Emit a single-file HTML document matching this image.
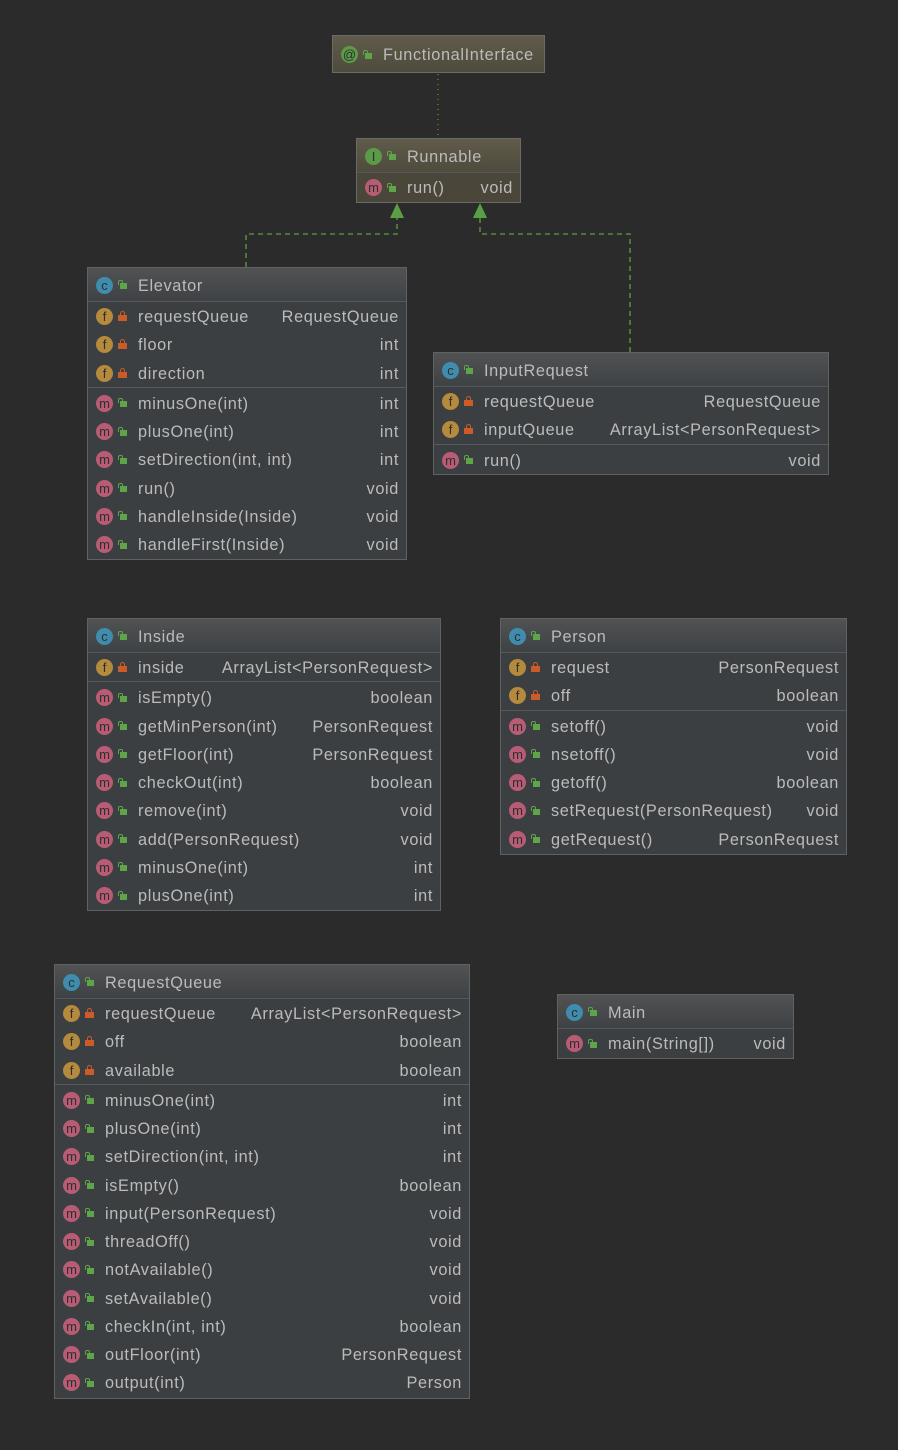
<!DOCTYPE html>
<html><head><meta charset="utf-8"><style>
*{margin:0;padding:0;box-sizing:border-box}
body{width:898px;height:1450px;background:#2b2b2b;position:relative;overflow:hidden;font-family:"Liberation Sans",sans-serif;color:#bbbbbb;font-size:16.3px;letter-spacing:0.65px}
.box{position:absolute;border:1px solid #5f6163;background:#3c3f41}
.h{height:34px;display:flex;align-items:center;padding-left:8px;background:linear-gradient(#505254,#3f4244);border-bottom:1px solid #555759}
.it .h{background:linear-gradient(#605b4a,#4f4b3d)}
.it{background:#4a4639;border-color:#6a6a66}
.r{height:28.25px;display:flex;align-items:center;padding-left:8px;padding-right:7px;white-space:nowrap}
.sep{height:2px;border-top:1px solid #585a5c}
.ic{width:17px;height:17px;border-radius:50%;display:inline-flex;align-items:center;justify-content:center;font-size:13px;letter-spacing:0;font-style:normal;color:#2e2e2e;flex:none;font-family:"Liberation Sans",sans-serif;margin-top:1px}
.c{background:#3f8cae}.f{background:#b48a3c}.m{background:#b85c75}.g{background:#5a9a48}
.pub{width:9px;height:9px;margin-left:5px;flex:none;position:relative}
.pub::before{content:"";position:absolute;left:2px;top:3px;width:7px;height:6px;background:#5ea448}
.pub::after{content:"";position:absolute;left:0;top:0;width:3px;height:4px;border:1.5px solid #5ea448;border-bottom:none;border-radius:2px 2px 0 0}
.lk{width:9px;height:10px;margin-left:5px;flex:none;position:relative}
.lk::before{content:"";position:absolute;left:0;top:4px;width:9px;height:6px;background:#cc5b2a}
.lk::after{content:"";position:absolute;left:2px;top:0;width:5px;height:5px;border:1.5px solid #cc5b2a;border-bottom:none;border-radius:3px 3px 0 0;box-sizing:border-box}
.n{margin-left:11px;flex:1;padding-top:3px}
.t{margin-left:10px;padding-top:3px}
</style></head><body>
<svg width="898" height="1450" style="position:absolute;left:0;top:0">
<line x1="438" y1="74" x2="438" y2="137" stroke="#a8a000" stroke-width="1" stroke-dasharray="1,4"/>
<polyline points="246,267 246,234 397,234 397,215" fill="none" stroke="#5a9e45" stroke-width="1.3" stroke-dasharray="5,4"/>
<polyline points="630,352 630,234 480,234 480,215" fill="none" stroke="#5a9e45" stroke-width="1.3" stroke-dasharray="5,4"/>
<polygon points="397,203 390,218 404,218" fill="#5a9e45"/>
<polygon points="480,203 473,218 487,218" fill="#5a9e45"/>
</svg>

<div class="box it" style="left:332px;top:35px;width:213px;height:38px">
<div class="h" style="height:36px;border:none"><i class="ic g">@</i><b class="pub"></b><span class="n">FunctionalInterface</span></div></div>

<div class="box it" style="left:356px;top:138px;width:165px;height:65px">
<div class="h"><i class="ic g">I</i><b class="pub"></b><span class="n">Runnable</span></div>
<div class="r"><i class="ic m">m</i><b class="pub"></b><span class="n">run()</span><span class="t">void</span></div></div>

<div class="box" style="left:87px;top:267px;width:320px;height:293px">
<div class="h"><i class="ic c">c</i><b class="pub"></b><span class="n">Elevator</span></div>
<div class="r"><i class="ic f">f</i><b class="lk"></b><span class="n">requestQueue</span><span class="t">RequestQueue</span></div>
<div class="r"><i class="ic f">f</i><b class="lk"></b><span class="n">floor</span><span class="t">int</span></div>
<div class="r"><i class="ic f">f</i><b class="lk"></b><span class="n">direction</span><span class="t">int</span></div>
<div class="sep"></div>
<div class="r"><i class="ic m">m</i><b class="pub"></b><span class="n">minusOne(int)</span><span class="t">int</span></div>
<div class="r"><i class="ic m">m</i><b class="pub"></b><span class="n">plusOne(int)</span><span class="t">int</span></div>
<div class="r"><i class="ic m">m</i><b class="pub"></b><span class="n">setDirection(int, int)</span><span class="t">int</span></div>
<div class="r"><i class="ic m">m</i><b class="pub"></b><span class="n">run()</span><span class="t">void</span></div>
<div class="r"><i class="ic m">m</i><b class="pub"></b><span class="n">handleInside(Inside)</span><span class="t">void</span></div>
<div class="r"><i class="ic m">m</i><b class="pub"></b><span class="n">handleFirst(Inside)</span><span class="t">void</span></div>
</div>

<div class="box" style="left:433px;top:352px;width:396px;height:123px">
<div class="h"><i class="ic c">c</i><b class="pub"></b><span class="n">InputRequest</span></div>
<div class="r"><i class="ic f">f</i><b class="lk"></b><span class="n">requestQueue</span><span class="t">RequestQueue</span></div>
<div class="r"><i class="ic f">f</i><b class="lk"></b><span class="n">inputQueue</span><span class="t">ArrayList&lt;PersonRequest&gt;</span></div>
<div class="sep"></div>
<div class="r"><i class="ic m">m</i><b class="pub"></b><span class="n">run()</span><span class="t">void</span></div>
</div>

<div class="box" style="left:87px;top:618px;width:354px;height:293px">
<div class="h"><i class="ic c">c</i><b class="pub"></b><span class="n">Inside</span></div>
<div class="r"><i class="ic f">f</i><b class="lk"></b><span class="n">inside</span><span class="t">ArrayList&lt;PersonRequest&gt;</span></div>
<div class="sep"></div>
<div class="r"><i class="ic m">m</i><b class="pub"></b><span class="n">isEmpty()</span><span class="t">boolean</span></div>
<div class="r"><i class="ic m">m</i><b class="pub"></b><span class="n">getMinPerson(int)</span><span class="t">PersonRequest</span></div>
<div class="r"><i class="ic m">m</i><b class="pub"></b><span class="n">getFloor(int)</span><span class="t">PersonRequest</span></div>
<div class="r"><i class="ic m">m</i><b class="pub"></b><span class="n">checkOut(int)</span><span class="t">boolean</span></div>
<div class="r"><i class="ic m">m</i><b class="pub"></b><span class="n">remove(int)</span><span class="t">void</span></div>
<div class="r"><i class="ic m">m</i><b class="pub"></b><span class="n">add(PersonRequest)</span><span class="t">void</span></div>
<div class="r"><i class="ic m">m</i><b class="pub"></b><span class="n">minusOne(int)</span><span class="t">int</span></div>
<div class="r"><i class="ic m">m</i><b class="pub"></b><span class="n">plusOne(int)</span><span class="t">int</span></div>
</div>

<div class="box" style="left:500px;top:618px;width:347px;height:237px">
<div class="h"><i class="ic c">c</i><b class="pub"></b><span class="n">Person</span></div>
<div class="r"><i class="ic f">f</i><b class="lk"></b><span class="n">request</span><span class="t">PersonRequest</span></div>
<div class="r"><i class="ic f">f</i><b class="lk"></b><span class="n">off</span><span class="t">boolean</span></div>
<div class="sep"></div>
<div class="r"><i class="ic m">m</i><b class="pub"></b><span class="n">setoff()</span><span class="t">void</span></div>
<div class="r"><i class="ic m">m</i><b class="pub"></b><span class="n">nsetoff()</span><span class="t">void</span></div>
<div class="r"><i class="ic m">m</i><b class="pub"></b><span class="n">getoff()</span><span class="t">boolean</span></div>
<div class="r"><i class="ic m">m</i><b class="pub"></b><span class="n">setRequest(PersonRequest)</span><span class="t">void</span></div>
<div class="r"><i class="ic m">m</i><b class="pub"></b><span class="n">getRequest()</span><span class="t">PersonRequest</span></div>
</div>

<div class="box" style="left:54px;top:964px;width:416px;height:435px">
<div class="h"><i class="ic c">c</i><b class="pub"></b><span class="n">RequestQueue</span></div>
<div class="r"><i class="ic f">f</i><b class="lk"></b><span class="n">requestQueue</span><span class="t">ArrayList&lt;PersonRequest&gt;</span></div>
<div class="r"><i class="ic f">f</i><b class="lk"></b><span class="n">off</span><span class="t">boolean</span></div>
<div class="r"><i class="ic f">f</i><b class="lk"></b><span class="n">available</span><span class="t">boolean</span></div>
<div class="sep"></div>
<div class="r"><i class="ic m">m</i><b class="pub"></b><span class="n">minusOne(int)</span><span class="t">int</span></div>
<div class="r"><i class="ic m">m</i><b class="pub"></b><span class="n">plusOne(int)</span><span class="t">int</span></div>
<div class="r"><i class="ic m">m</i><b class="pub"></b><span class="n">setDirection(int, int)</span><span class="t">int</span></div>
<div class="r"><i class="ic m">m</i><b class="pub"></b><span class="n">isEmpty()</span><span class="t">boolean</span></div>
<div class="r"><i class="ic m">m</i><b class="pub"></b><span class="n">input(PersonRequest)</span><span class="t">void</span></div>
<div class="r"><i class="ic m">m</i><b class="pub"></b><span class="n">threadOff()</span><span class="t">void</span></div>
<div class="r"><i class="ic m">m</i><b class="pub"></b><span class="n">notAvailable()</span><span class="t">void</span></div>
<div class="r"><i class="ic m">m</i><b class="pub"></b><span class="n">setAvailable()</span><span class="t">void</span></div>
<div class="r"><i class="ic m">m</i><b class="pub"></b><span class="n">checkIn(int, int)</span><span class="t">boolean</span></div>
<div class="r"><i class="ic m">m</i><b class="pub"></b><span class="n">outFloor(int)</span><span class="t">PersonRequest</span></div>
<div class="r"><i class="ic m">m</i><b class="pub"></b><span class="n">output(int)</span><span class="t">Person</span></div>
</div>

<div class="box" style="left:557px;top:994px;width:237px;height:65px">
<div class="h"><i class="ic c">c</i><b class="pub"></b><span class="n">Main</span></div>
<div class="r"><i class="ic m">m</i><b class="pub"></b><span class="n">main(String[])</span><span class="t">void</span></div>
</div>
</body></html>
